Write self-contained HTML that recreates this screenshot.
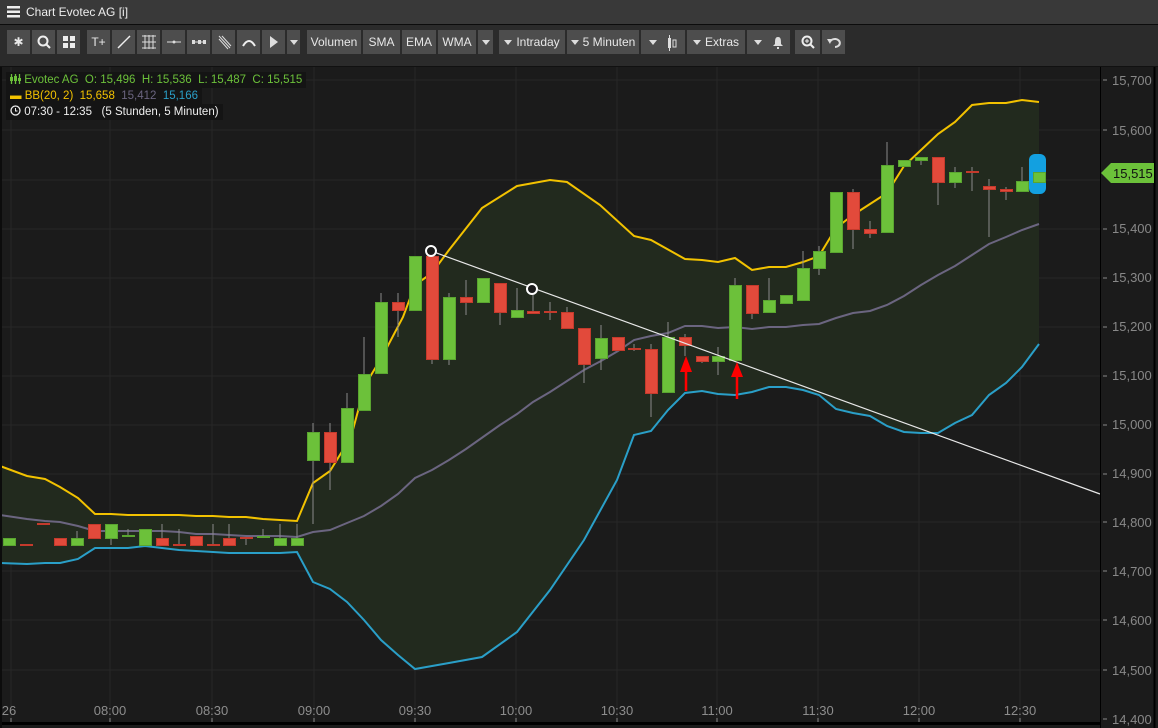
<!DOCTYPE html>
<html><head><meta charset="utf-8"><style>
*{margin:0;padding:0;box-sizing:border-box}
body{width:1158px;height:728px;overflow:hidden;background:#1b1b1b;font-family:"Liberation Sans",sans-serif;position:relative}
#title{position:absolute;left:0;top:0;width:1158px;height:25px;background:#393939;border-bottom:1px solid #0c0c0c;color:#eee;font-size:12px}
#tb{position:absolute;left:0;top:25px;width:1158px;height:42px;background:#2b2b2b;border-bottom:1px solid #111}
.b{position:absolute;top:5px;height:24px;background:#4d4d4d;color:#e8e8e8;font-size:12px;line-height:24px;text-align:center}
.dn{display:inline-block;width:0;height:0;border-left:4px solid transparent;border-right:4px solid transparent;border-top:5px solid #ddd;vertical-align:middle;margin-right:4px}
#leg{position:absolute;left:6px;top:72px;font-size:11.5px;line-height:16px}
#leg div{background:#141414;display:inline-block;padding:0 4px}
</style></head><body>
<div id="title"><svg style="position:absolute;left:7px;top:6px" width="13" height="12"><rect y="0" width="13" height="2.5" fill="#eee"/><rect y="4.5" width="13" height="2.5" fill="#eee"/><rect y="9" width="13" height="2.5" fill="#eee"/></svg><span style="position:absolute;left:26px;top:5px">Chart Evotec AG [i]</span></div>
<div id="tb">
<div class="b" style="left:7px;width:23px">✱</div>
<div class="b" style="left:32px;width:23px"><svg width="14" height="14" style="margin-top:5px"><circle cx="6" cy="6" r="4.5" stroke="#eee" stroke-width="2" fill="none"/><line x1="9" y1="9" x2="13" y2="13" stroke="#eee" stroke-width="2"/></svg></div>
<div class="b" style="left:57px;width:23px"><svg width="12" height="12" style="margin-top:6px"><rect width="5" height="5" fill="#eee"/><rect x="7" width="5" height="5" fill="#eee"/><rect y="7" width="5" height="5" fill="#eee"/><rect x="7" y="7" width="5" height="5" fill="#eee"/></svg></div>
<div class="b" style="left:87px;width:23px">T+</div>
<div class="b" style="left:112px;width:23px"><svg width="16" height="16" style="margin-top:4px"><line x1="2" y1="14" x2="14" y2="2" stroke="#eee" stroke-width="1.5"/></svg></div>
<div class="b" style="left:137px;width:23px"><svg width="16" height="16" style="margin-top:4px"><path d="M1 2h14M1 8h14M1 14h14M4 1v14M8 1v14M12 1v14" stroke="#ddd" stroke-width="1"/></svg></div>
<div class="b" style="left:162px;width:23px"><svg width="16" height="8" style="margin-top:8px"><line x1="1" y1="4" x2="15" y2="4" stroke="#ddd"/><circle cx="8" cy="4" r="1.5" fill="#ddd"/></svg></div>
<div class="b" style="left:187px;width:23px"><svg width="16" height="8" style="margin-top:8px"><line x1="1" y1="4" x2="15" y2="4" stroke="#ddd"/><rect x="1" y="2" width="3" height="4" fill="#ddd"/><rect x="7" y="2" width="3" height="4" fill="#ddd"/><rect x="12" y="2" width="3" height="4" fill="#ddd"/></svg></div>
<div class="b" style="left:212px;width:23px"><svg width="16" height="16" style="margin-top:4px"><path d="M3 2l11 12M3 5l9 10M6 2l9 10" stroke="#ddd"/></svg></div>
<div class="b" style="left:237px;width:23px"><svg width="16" height="12" style="margin-top:6px"><path d="M2 10Q8 0 14 10" stroke="#eee" stroke-width="2" fill="none"/></svg></div>
<div class="b" style="left:262px;width:23px"><svg width="10" height="14" style="margin-top:5px"><path d="M1 1L9 7L1 13Z" fill="#ddd"/></svg></div>
<div class="b" style="left:287px;width:13px"><span class="dn" style="margin:0"></span></div>
<div class="b" style="left:307px;width:54px">Volumen</div>
<div class="b" style="left:363px;width:37px">SMA</div>
<div class="b" style="left:402px;width:34px">EMA</div>
<div class="b" style="left:438px;width:38px">WMA</div>
<div class="b" style="left:478px;width:15px"><span class="dn" style="margin:0"></span></div>
<div class="b" style="left:499px;width:66px"><span class="dn"></span>Intraday</div>
<div class="b" style="left:567px;width:72px"><span class="dn"></span>5 Minuten</div>
<div class="b" style="left:641px;width:44px"><span class="dn" style="margin-right:10px"></span><svg width="10" height="16" style="vertical-align:middle"><rect x="1" y="3" width="3" height="10" fill="#ddd"/><line x1="2.5" y1="0" x2="2.5" y2="16" stroke="#ddd"/><rect x="6" y="5" width="3" height="7" fill="none" stroke="#ddd"/></svg></div>
<div class="b" style="left:687px;width:58px"><span class="dn"></span>Extras</div>
<div class="b" style="left:747px;width:43px"><span class="dn" style="margin-right:10px"></span><svg width="12" height="13" style="vertical-align:middle"><path d="M6 1C3 1 3 4 3 8L1 10h10L9 8C9 4 9 1 6 1ZM5 11h2v2h-2z" fill="#ddd"/></svg></div>
<div class="b" style="left:795px;width:25px"><svg width="14" height="14" style="margin-top:5px"><circle cx="6" cy="6" r="4.5" stroke="#eee" stroke-width="2" fill="none"/><line x1="9" y1="9" x2="13" y2="13" stroke="#eee" stroke-width="2"/><path d="M4 6h4M6 4v4" stroke="#eee"/></svg></div>
<div class="b" style="left:822px;width:23px"><svg width="14" height="12" style="margin-top:6px"><path d="M3 6A5 4 0 1 1 8 11" stroke="#ddd" stroke-width="2" fill="none"/><path d="M0 3L5 3L3 8Z" fill="#ddd"/></svg></div>
</div>
<svg style="position:absolute;left:0;top:67px" width="1158" height="661" viewBox="0 67 1158 661">
<rect x="0" y="67" width="1158" height="661" fill="#1b1b1b"/>
<g stroke="#272727" stroke-width="1">
<path d="M0 80H1100M0 130H1100M0 180H1100M0 229H1100M0 278H1100M0 327H1100M0 376H1100M0 425H1100M0 474H1100M0 522H1100M0 571H1100M0 620H1100M0 670H1100"/>
<path d="M11 67V720M110 67V720M212 67V720M314 67V720M415 67V720M516 67V720M617 67V720M717 67V720M818 67V720M919 67V720M1020 67V720"/>
</g>
<polygon fill="#222a1e" points="0,466 27,476 45,479 60,487 78,498 95,514 111,514 128,515 145,515 162,515 179,515 196,516 213,516 229,517 246,517 263,519 280,520 297,521 313,483 330,471 351,437 365,385 382,357 403,317 415,285 432,273 449,250 482,208 517,186 550,180 567,182 600,205 634,236 651,240 685,259 702,260 718,262 735,258 752,270 769,267 786,267 803,262 819,256 836,228 853,215 870,204 887,193 904,166 921,150 938,134 955,122 972,105 989,103 1006,103 1022,100 1039,102 1039,344 1022,367 1006,383 989,395 972,415 955,423 938,433 921,433 904,432 887,426 870,416 853,413 836,409 819,395 803,390 786,387 769,387 752,392 735,395 718,394 702,391 685,393 668,410 651,431 634,435 617,480 584,540 550,590 517,632 482,657 449,663 415,669 398,655 381,640 364,620 347,602 330,589 313,582 297,552 280,553 263,553 246,553 229,553 213,552 196,551 179,550 162,548 145,546 128,548 111,548 95,548 78,559 60,563 45,563 27,564 0,563"/>
<polyline fill="none" stroke="#f2c200" stroke-width="2" points="0,466 27,476 45,479 60,487 78,498 95,514 111,514 128,515 145,515 162,515 179,515 196,516 213,516 229,517 246,517 263,519 280,520 297,521 313,483 330,471 351,437 365,385 382,357 403,317 415,285 432,273 449,250 482,208 517,186 550,180 567,182 600,205 634,236 651,240 685,259 702,260 718,262 735,258 752,270 769,267 786,267 803,262 819,256 836,228 853,215 870,204 887,193 904,166 921,150 938,134 955,122 972,105 989,103 1006,103 1022,100 1039,102"/>
<polyline fill="none" stroke="#2a9fc8" stroke-width="2" points="0,563 27,564 45,563 60,563 78,559 95,548 111,548 128,548 145,546 162,548 179,550 196,551 213,552 229,553 246,553 263,553 280,553 297,552 313,582 330,589 347,602 364,620 381,640 398,655 415,669 449,663 482,657 517,632 550,590 584,540 617,480 634,435 651,431 668,410 685,393 702,391 718,394 735,395 752,392 769,387 786,387 803,390 819,395 836,409 853,413 870,416 887,426 904,432 921,433 938,433 955,423 972,415 989,395 1006,383 1022,367 1039,344"/>
<polyline fill="none" stroke="#6b6580" stroke-width="2" points="0,515 27,519 45,521 60,522 78,526 95,531 111,531 128,531 145,531 162,531 179,532 196,534 213,534 229,535 246,536 263,536 280,536 297,537 313,532 330,530 347,523 364,516 381,506 398,494 415,478 432,470 449,460 466,449 483,437 500,425 517,414 533,402 550,392 567,381 584,370 601,361 618,351 634,340 651,336 668,333 685,326 702,326 718,328 735,327 752,329 769,327 786,327 803,325 819,324 836,318 853,313 870,311 887,305 904,296 921,285 938,275 955,266 972,255 989,244 1006,237 1022,230 1039,224"/>
<g stroke="#8a8a8a" stroke-width="1">
<path d="M77 531V545M111 538V545M128 529V537M162 524V538M179 529V545M213 524V545M229 524V538M246 538V545M263 529V537M280 524V538M297 524V538M313 423V524M330 423V490M347 393V408M364 337V374M381 293V302M398 293V337M432 359V364M449 293V365M466 280V315M500 312V325M517 288V310M533 295V311M550 302V320M567 307V312M584 364V383M601 325V370M634 344V351M651 344V417M668 322V337M685 334V356M702 361V363M718 347V375M735 278V285M752 313V319M769 278V300M803 251V268M819 246V275M853 189V249M870 221V238M887 142V165M921 160V165M938 182V205M955 167V188M972 167V191M989 179V237M1006 187V200M1022 167V181M1039 162V185"/>
</g>
<g fill="#6cc13a" stroke="#5aa530">
<rect x="3.5" y="538.5" width="12" height="7"/><rect x="71.5" y="538.5" width="12" height="7"/><rect x="105.5" y="524.5" width="12" height="14"/><rect x="122.5" y="535.5" width="12" height="1"/><rect x="139.5" y="529.5" width="12" height="16"/><rect x="257.5" y="536.5" width="12" height="1"/><rect x="274.5" y="538.5" width="12" height="7"/><rect x="291.5" y="538.5" width="12" height="7"/><rect x="307.5" y="432.5" width="12" height="28"/><rect x="341.5" y="408.5" width="12" height="54"/><rect x="358.5" y="374.5" width="12" height="36"/><rect x="375.5" y="302.5" width="12" height="71"/><rect x="409.5" y="256.5" width="12" height="54"/><rect x="443.5" y="297.5" width="12" height="62"/><rect x="477.5" y="278.5" width="12" height="24"/><rect x="511.5" y="310.5" width="12" height="7"/><rect x="595.5" y="338.5" width="12" height="20"/><rect x="662.5" y="337.5" width="12" height="55"/><rect x="712.5" y="356.5" width="12" height="5"/><rect x="729.5" y="285.5" width="12" height="75"/><rect x="763.5" y="300.5" width="12" height="12"/><rect x="780.5" y="295.5" width="12" height="8"/><rect x="797.5" y="268.5" width="12" height="32"/><rect x="813.5" y="251.5" width="12" height="17"/><rect x="830.5" y="192.5" width="12" height="60"/><rect x="881.5" y="165.5" width="12" height="67"/><rect x="898.5" y="160.5" width="12" height="6"/><rect x="915.5" y="157.5" width="12" height="3"/><rect x="949.5" y="172.5" width="12" height="10"/><rect x="1016.5" y="181.5" width="12" height="10"/>
</g>
<g fill="#e24a3b" stroke="#c43a2c">
<rect x="20.5" y="544.5" width="12" height="1"/><rect x="37.5" y="523.5" width="12" height="1"/><rect x="54.5" y="538.5" width="12" height="7"/><rect x="88.5" y="524.5" width="12" height="14"/><rect x="156.5" y="538.5" width="12" height="7"/><rect x="173.5" y="544.5" width="12" height="1"/><rect x="190.5" y="536.5" width="12" height="9"/><rect x="207.5" y="544.5" width="12" height="1"/><rect x="223.5" y="538.5" width="12" height="7"/><rect x="240.5" y="537.5" width="12" height="1"/><rect x="324.5" y="432.5" width="12" height="30"/><rect x="392.5" y="302.5" width="12" height="8"/><rect x="426.5" y="256.5" width="12" height="103"/><rect x="460.5" y="297.5" width="12" height="5"/><rect x="494.5" y="283.5" width="12" height="29"/><rect x="527.5" y="311.5" width="12" height="2"/><rect x="544.5" y="311.5" width="12" height="1"/><rect x="561.5" y="312.5" width="12" height="16"/><rect x="578.5" y="328.5" width="12" height="36"/><rect x="612.5" y="337.5" width="12" height="13"/><rect x="628.5" y="348.5" width="12" height="1"/><rect x="645.5" y="349.5" width="12" height="44"/><rect x="679.5" y="337.5" width="12" height="8"/><rect x="696.5" y="356.5" width="12" height="5"/><rect x="746.5" y="285.5" width="12" height="28"/><rect x="847.5" y="192.5" width="12" height="37"/><rect x="864.5" y="229.5" width="12" height="4"/><rect x="932.5" y="157.5" width="12" height="25"/><rect x="966.5" y="171.5" width="12" height="1"/><rect x="983.5" y="186.5" width="12" height="3"/><rect x="1000.5" y="189.5" width="12" height="2"/>
</g>
<rect x="1029" y="154" width="17" height="40" rx="6" fill="#13a0e0"/>
<rect x="1033.5" y="172.5" width="12" height="10" fill="#6cc13a" stroke="#5aa530"/>
<line x1="431" y1="251" x2="1100" y2="494" stroke="#e8e8e8" stroke-width="1.2"/>
<circle cx="431" cy="251" r="5" fill="#1b1b1b" stroke="#fff" stroke-width="2"/>
<circle cx="532" cy="289" r="5" fill="#1b1b1b" stroke="#fff" stroke-width="2"/>
<g fill="#f00" stroke="#f00" stroke-width="2.5"><line x1="686" y1="391" x2="686" y2="366"/><line x1="737" y1="399" x2="737" y2="372"/></g>
<path d="M680 372L686 356L692 372Z M731 377L737 362L743 377Z" fill="#f00"/>
<rect x="1100" y="67" width="58" height="661" fill="#1b1b1b"/>
<line x1="1100.5" y1="67" x2="1100.5" y2="728" stroke="#000"/>
<line x1="1154.5" y1="67" x2="1154.5" y2="728" stroke="#000" stroke-width="2"/>
<g fill="#888" font-size="13" font-family="Liberation Sans, sans-serif">
<text x="1112" y="85">15,700</text><text x="1112" y="135">15,600</text><text x="1112" y="233">15,400</text><text x="1112" y="282">15,300</text><text x="1112" y="331">15,200</text><text x="1112" y="380">15,100</text><text x="1112" y="429">15,000</text><text x="1112" y="478">14,900</text><text x="1112" y="527">14,800</text><text x="1112" y="576">14,700</text><text x="1112" y="625">14,600</text><text x="1112" y="675">14,500</text><text x="1112" y="724">14,400</text>
</g>
<path d="M1103 80h4M1103 130h4M1103 229h4M1103 278h4M1103 327h4M1103 376h4M1103 425h4M1103 474h4M1103 522h4M1103 571h4M1103 620h4M1103 670h4M1103 719h4" stroke="#888"/>
<path d="M1101 173L1111 163H1154V183H1111Z" fill="#6cc13a"/>
<text x="1113" y="178" font-size="13" fill="#111" font-family="Liberation Sans, sans-serif">15,515</text>
<g fill="#8d8d8d" font-size="13" font-family="Liberation Sans, sans-serif" text-anchor="middle">
<text x="9" y="715">26</text><text x="110" y="715">08:00</text><text x="212" y="715">08:30</text><text x="314" y="715">09:00</text><text x="415" y="715">09:30</text><text x="516" y="715">10:00</text><text x="617" y="715">10:30</text><text x="717" y="715">11:00</text><text x="818" y="715">11:30</text><text x="919" y="715">12:00</text><text x="1020" y="715">12:30</text>
</g>
<path d="M11 718v4M110 718v4M212 718v4M314 718v4M415 718v4M516 718v4M617 718v4M717 718v4M818 718v4M919 718v4M1020 718v4" stroke="#888"/>
<rect x="0" y="722" width="1100" height="3" fill="#000"/>
<rect x="0" y="67" width="2" height="661" fill="#0c0c0c"/>
</svg>
<div id="leg">
<div style="color:#6cc13a"><svg width="11" height="11" style="vertical-align:-1px"><path d="M1.5 1v10M5.5 1v10M9.5 1v10" stroke="#6cc13a" stroke-width="1.3"/><rect x="0" y="4" width="3" height="4" fill="#6cc13a"/><rect x="4" y="3" width="3" height="5" fill="#6cc13a"/><rect x="8" y="5" width="3" height="3" fill="#6cc13a"/></svg> Evotec AG&nbsp; O: 15,496&nbsp; H: 15,536&nbsp; L: 15,487&nbsp; C: 15,515</div><br>
<div><span style="color:#f2c200">▬ BB(20, 2)&nbsp; 15,658</span>&nbsp; <span style="color:#6b6580">15,412</span>&nbsp; <span style="color:#2a9fc8">15,166</span></div><br>
<div style="color:#eee"><svg width="11" height="11" style="vertical-align:-1px"><circle cx="5.5" cy="5.5" r="4.5" stroke="#eee" stroke-width="1.3" fill="none"/><path d="M5.5 3v3h2" stroke="#eee" fill="none"/></svg> 07:30 - 12:35&nbsp;&nbsp; (5 Stunden, 5 Minuten)</div>
</div>
</body></html>
